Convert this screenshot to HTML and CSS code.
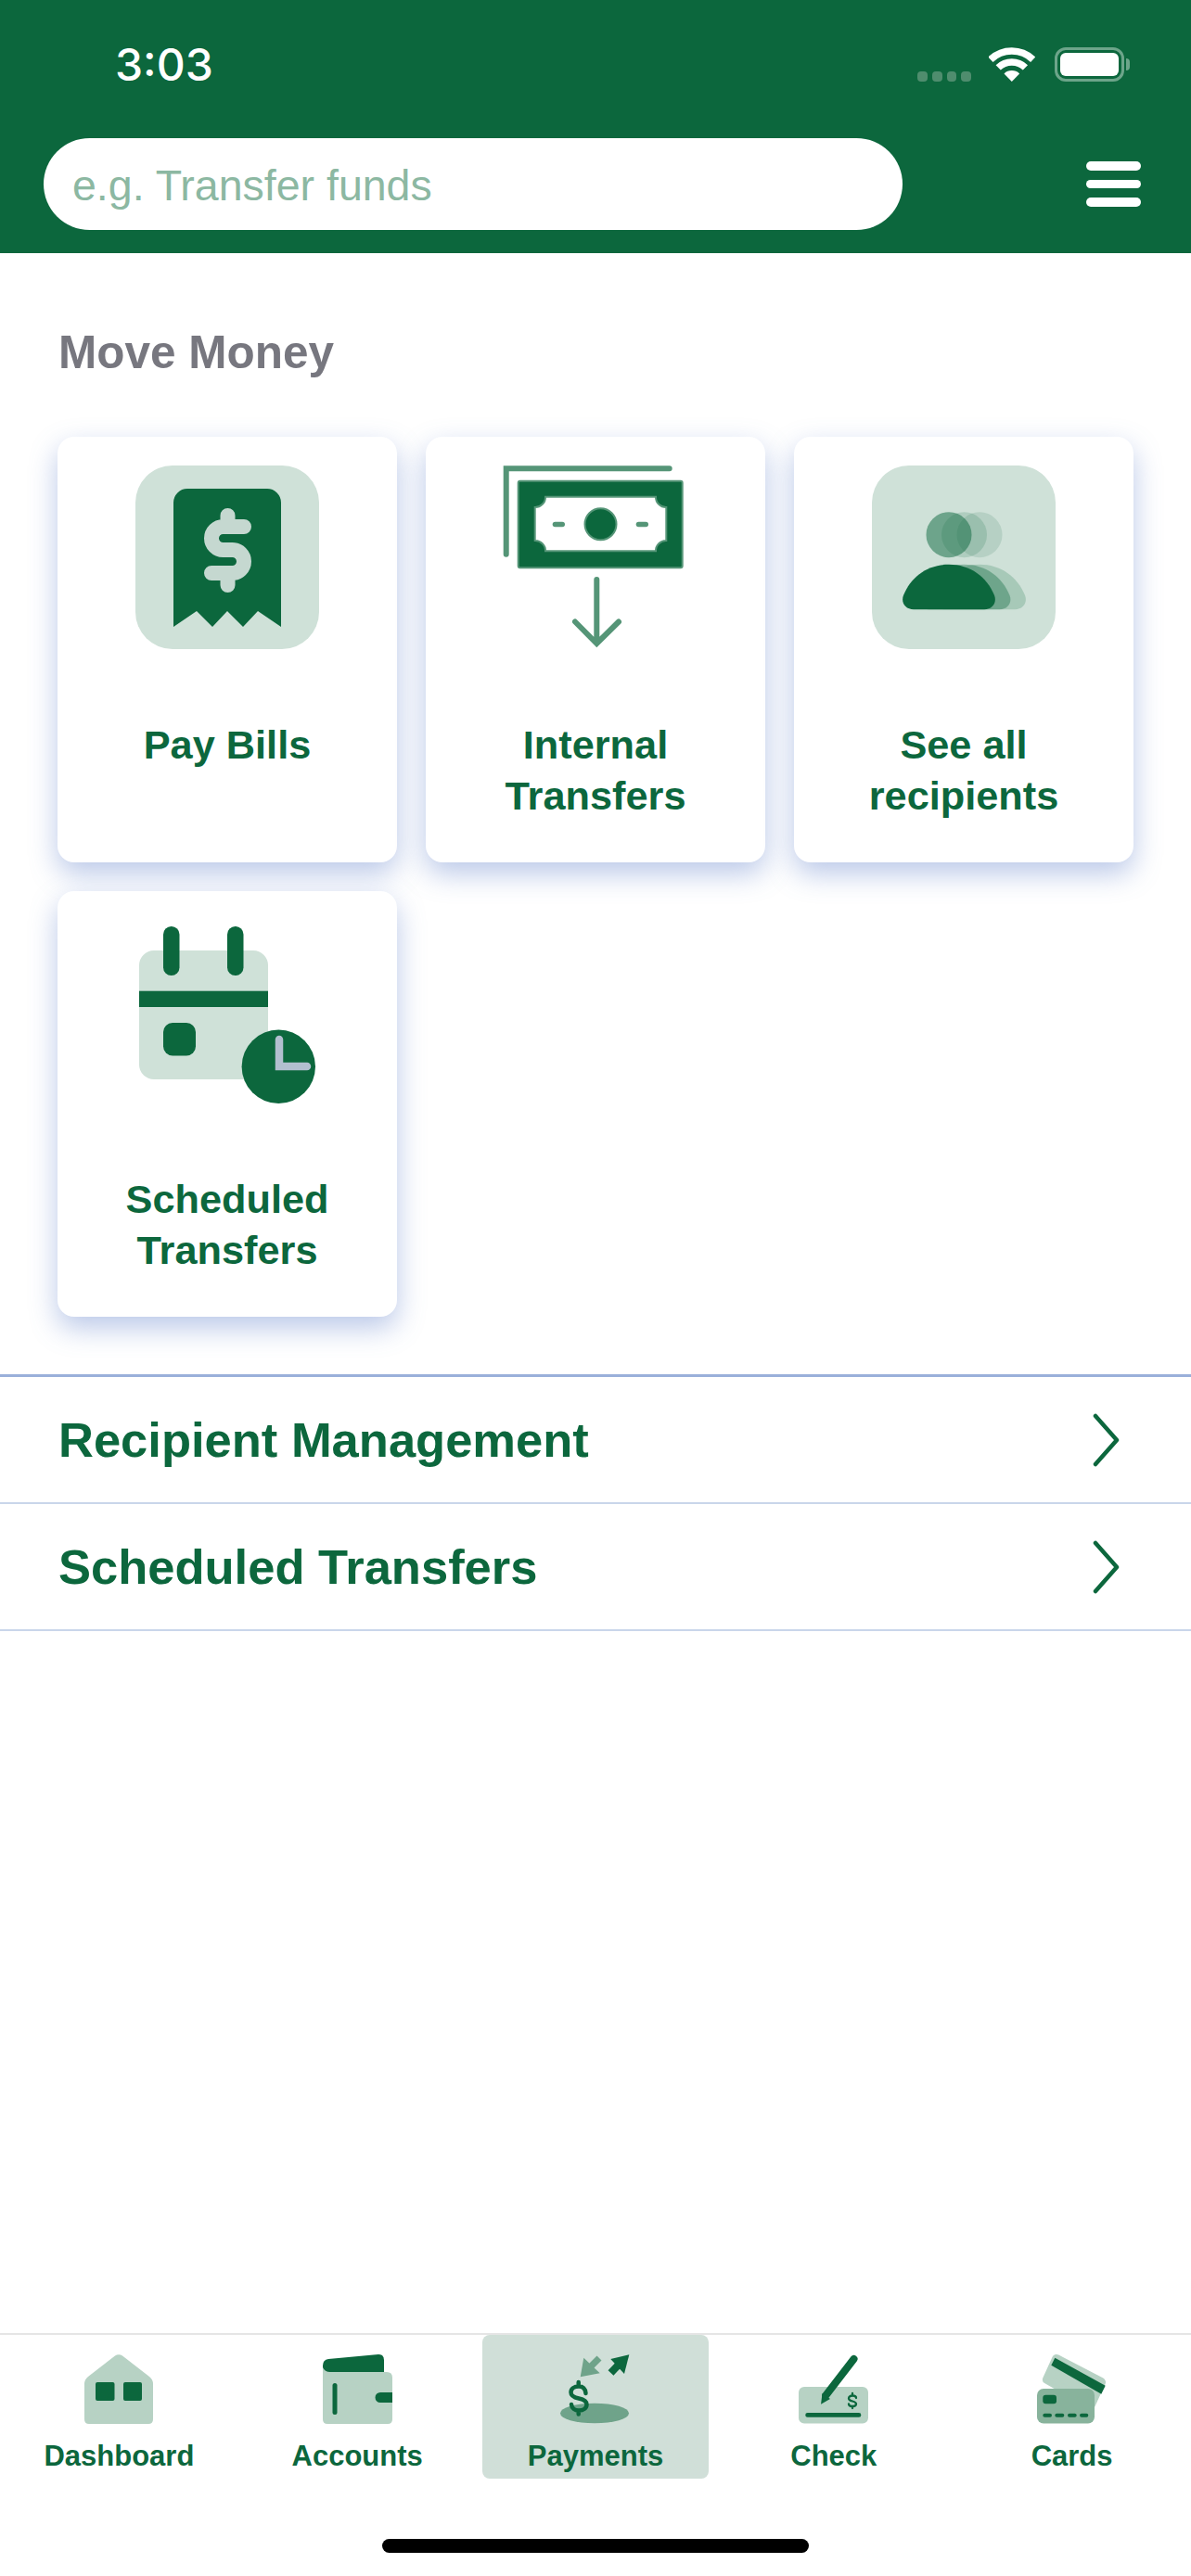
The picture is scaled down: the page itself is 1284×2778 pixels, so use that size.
FILE: index.html
```html
<!DOCTYPE html>
<html lang="en">
<head>
    <meta charset="UTF-8">
    <meta name="viewport" content="width=device-width, initial-scale=1.0">
    <title>Move Money</title>
    <link rel="stylesheet" href="styles.css">
</head>
<body>
<div class="app">

    <header class="topbar">
        <div class="status">
            <span class="time">3:03</span>
            <div class="status-icons">
                <div class="signal"><i></i><i></i><i></i><i></i></div>
                <svg class="wifi" viewBox="0 0 50 37">
                    <path class="wifi-arc" d="M1.9 13.2A33 33 0 0 1 47.7 13.2"/>
                    <path class="wifi-arc" d="M10.2 21.9A21 21 0 0 1 39.4 21.9"/>
                    <path class="white" d="M24.8 37L16.5 28.4A12 12 0 0 1 33.1 28.4Z"/>
                </svg>
                <div class="battery"><div class="battery-fill"></div></div>
                <div class="battery-nub"></div>
            </div>
        </div>
        <div class="search-row">
            <div class="search">e.g. Transfer funds</div>
            <div class="menu"><i></i><i></i><i></i></div>
        </div>
    </header>

    <main class="content">
        <h1 class="title">Move Money</h1>

        <div class="tiles">
            <a class="tile">
                <svg class="tile-icon" viewBox="0 0 198 198">
                    <rect class="pale" width="198" height="198" rx="40"/>
                    <path class="dark" d="M41 174V40A15 15 0 0 1 56 25H142A15 15 0 0 1 157 40V174L132 157L116 174L99 157L83 174L66 157Z"/>
                    <path class="receipt-dollar" d="M117 66H94.5A12.5 12.5 0 0 0 94.5 91H104.5A12.5 12.5 0 0 1 104.5 116H82M99.5 54V66M99.5 116V129"/>
                </svg>
                <span class="tile-label">Pay Bills</span>
            </a>
            <a class="tile">
                <svg class="tile-icon" viewBox="0 0 198 198">
                    <path class="money-line" d="M2.7 95.7V3.3H178.7"/>
                    <rect class="dark bill-edge" x="15.7" y="16.7" width="177" height="93.6" rx="2"/>
                    <path class="white bill-edge" d="M45 33.7H164A11 11 0 0 0 175.3 45V81A11 11 0 0 0 164 92.3H45A11 11 0 0 0 33.7 81V45A11 11 0 0 0 45 33.7Z"/>
                    <circle class="dark bill-edge" cx="104.5" cy="63.3" r="17"/>
                    <rect class="mid" x="52.7" y="60.7" width="13.3" height="5.6" rx="2.8"/>
                    <rect class="mid" x="142.7" y="60.7" width="13.3" height="5.6" rx="2.8"/>
                    <path class="money-line" d="M100.3 123V190M77 168.5L100.3 192L124 168.5"/>
                </svg>
                <span class="tile-label">Internal<br>Transfers</span>
            </a>
            <a class="tile">
                <svg class="tile-icon" viewBox="0 0 198 198">
                    <rect class="pale" width="198" height="198" rx="40"/>
                    <circle class="dark fade-1" cx="116" cy="74.7" r="24.5"/>
                    <circle class="dark fade-2" cx="99.5" cy="74.7" r="24.5"/>
                    <circle class="dark fade-3" cx="83" cy="74.7" r="24.5"/>
                    <g class="dark">
                        <path class="fade-4" transform="translate(33 0)" d="M45 155.3H121C130 155.3 135 148 132 140C124 120 106 106.7 83 106.7C60 106.7 42 120 34 140C31 148 36 155.3 45 155.3Z"/>
                        <path class="fade-5" transform="translate(16.5 0)" d="M45 155.3H121C130 155.3 135 148 132 140C124 120 106 106.7 83 106.7C60 106.7 42 120 34 140C31 148 36 155.3 45 155.3Z"/>
                        <path d="M45 155.3H121C130 155.3 135 148 132 140C124 120 106 106.7 83 106.7C60 106.7 42 120 34 140C31 148 36 155.3 45 155.3Z"/>
                    </g>
                </svg>
                <span class="tile-label">See all<br>recipients</span>
            </a>
            <a class="tile">
                <svg class="tile-icon" viewBox="0 0 198 198">
                    <rect class="pale" x="4" y="33" width="139" height="139" rx="16"/>
                    <rect class="dark" x="30" y="7" width="17.5" height="53" rx="8.7"/>
                    <rect class="dark" x="99" y="7" width="17.5" height="53" rx="8.7"/>
                    <rect class="dark" x="4" y="76.7" width="139" height="17.3"/>
                    <rect class="dark" x="30" y="111" width="35" height="35.5" rx="10"/>
                    <circle class="dark" cx="154.3" cy="158.3" r="39.7"/>
                    <path class="clock-hand" d="M155 129V158H185"/>
                </svg>
                <span class="tile-label">Scheduled<br>Transfers</span>
            </a>
        </div>

        <ul class="links">
            <li class="link-row">
                <span>Recipient Management</span>
                <svg class="chevron" viewBox="0 0 32 60"><path d="M3 4L26 30L3 56"/></svg>
            </li>
            <li class="link-row">
                <span>Scheduled Transfers</span>
                <svg class="chevron" viewBox="0 0 32 60"><path d="M3 4L26 30L3 56"/></svg>
            </li>
        </ul>
    </main>

    <footer class="tabbar">
        <nav class="tabs">
            <a class="tab">
                <svg class="tab-icon" viewBox="0 0 75 75">
                    <path class="soft" d="M33 1.5Q37 -1 41 1.5L70 24Q74 27 74 32V70Q74 75 69 75H5Q0 75 0 70V32Q0 27 4 24Z"/>
                    <rect class="dark" x="12" y="30" width="20.5" height="20" rx="2"/>
                    <rect class="dark" x="42" y="30" width="20" height="20" rx="2"/>
                </svg>
                <span>Dashboard</span>
            </a>
            <a class="tab">
                <svg class="tab-icon" viewBox="0 0 75 75">
                    <path class="dark" d="M0 12Q0 6 6 5L60 0Q66 0 66 6V25H0Z"/>
                    <path class="soft" d="M0 14Q2 19 8 19H69Q75 19 75 25V70Q75 75 70 75H5Q0 75 0 70Z"/>
                    <rect class="dark" x="10.5" y="31" width="5" height="34" rx="2.5"/>
                    <path class="dark" d="M62 41H75V52H62A5.5 5.5 0 0 1 62 41Z"/>
                </svg>
                <span>Accounts</span>
            </a>
            <a class="tab is-active">
                <svg class="tab-icon" viewBox="0 0 75 75">
                    <ellipse class="mid-soft" cx="37" cy="63.5" rx="37" ry="10.8"/>
                    <path class="mid-soft" d="M21.7 24.3L25.3 3.7L42.7 20.3Z"/>
                    <path class="arrow-back" d="M33 13L42 4"/>
                    <path class="dark" d="M54.3 5L74.3 0.3L69 21Z"/>
                    <path class="arrow-front" d="M63 11L54.5 20"/>
                    <path class="big-dollar" d="M27.5 42C27 37 24 34.5 20 34.5C15 34.5 11.5 37 11.5 41C11.5 45 15 46.5 20 47.5C25 48.5 28.5 50 28.5 54C28.5 58 25 60.5 20 60.5C15.5 60.5 12.5 58 12 54M19.7 30V34M19.7 61V64.5"/>
                </svg>
                <span>Payments</span>
            </a>
            <a class="tab">
                <svg class="tab-icon" viewBox="0 0 75 75">
                    <rect class="soft" y="35" width="75" height="39.5" rx="6"/>
                    <rect class="dark" x="7.3" y="63" width="60" height="4.7" rx="2.3"/>
                    <path class="dark" d="M24 53.7L25.5 42L34 48Z"/>
                    <path class="pen" d="M29.3 44.3L59.5 5"/>
                    <path class="small-dollar" d="M62 47C62 45 60 44.5 58 44.5C55.5 44.5 54 46 54 47.5C54 49.5 56 50 58 50.5C60 51 62 51.5 62 53.5C62 55 60.5 56 58 56C56 56 54 55.5 54 53.5M58 42V44.5M58 56V58"/>
                </svg>
                <span>Check</span>
            </a>
            <a class="tab">
                <svg class="tab-icon" viewBox="0 0 75 75">
                    <path class="soft card-back" d="M21 5L69 30L58 54L11 27Z"/>
                    <path class="dark" d="M19.3 3.7L73.7 33.7L69.3 42.7L15.3 11.7Z"/>
                    <rect class="mid-card" y="37" width="62" height="37.5" rx="7"/>
                    <rect class="dark" x="6.3" y="43.7" width="14.7" height="9.6" rx="3"/>
                    <rect class="dark" x="6.3" y="63.7" width="9.7" height="4" rx="2"/>
                    <rect class="dark" x="19.3" y="63.7" width="10" height="4" rx="2"/>
                    <rect class="dark" x="33" y="63.7" width="9.7" height="4" rx="2"/>
                    <rect class="dark" x="46" y="63.7" width="9.3" height="4" rx="2"/>
                </svg>
                <span>Cards</span>
            </a>
        </nav>
        <div class="home-bar"></div>
    </footer>

</div>
</body>
</html>
```

FILE: styles.css
```css
body {
    margin: 0;
    background-color: #fff;
    font-family: "Liberation Sans", Arial, sans-serif;
    color: #0c673d;
}

.app {
    display: flex;
    flex-direction: column;
    height: 2778px;
}

/* svg colours */
.dark { fill: #0c673d; }
.pale { fill: #cfe1d8; }
.soft { fill: #b7d2c4; }
.mid { fill: #559577; }
.mid-soft { fill: #6fa38a; }
.mid-card { fill: #88b39c; }
.white { fill: #fff; }

.fade-1 { opacity: 0.13; }
.fade-2 { opacity: 0.16; }
.fade-3 { opacity: 0.5; }
.fade-4 { opacity: 0.2; }
.fade-5 { opacity: 0.36; }

/* header */
.topbar {
    height: 273px;
    flex-shrink: 0;
    background-color: #0c673d;
}

.status {
    display: flex;
    justify-content: space-between;
    align-items: center;
    height: 37px;
    padding: 51px 66px 0 124px;
}

.time {
    font-family: Inter, "Liberation Sans", sans-serif;
    font-size: 48px;
    font-weight: 500;
    line-height: 37px;
    color: #fff;
}

.status-icons {
    display: flex;
    align-items: flex-end;
}

.signal {
    display: flex;
    gap: 5px;
    margin-right: 19px;
}

.signal i {
    width: 10.7px;
    height: 10.7px;
    border-radius: 4px;
    background-color: #4f8d6e;
}

.wifi {
    width: 50px;
    height: 37px;
    margin-right: 21px;
}

.wifi-arc {
    fill: none;
    stroke: #fff;
    stroke-width: 7.5;
}

.battery {
    box-sizing: border-box;
    width: 75px;
    height: 37px;
    padding: 3px;
    border: 3px solid #6da58a;
    border-radius: 12px;
}

.battery-fill {
    height: 100%;
    border-radius: 6px;
    background-color: #fff;
}

.battery-nub {
    align-self: center;
    width: 4px;
    height: 13px;
    margin-left: 2px;
    border-radius: 0 6px 6px 0;
    background-color: #6da58a;
}

.search-row {
    display: flex;
    justify-content: space-between;
    align-items: center;
    margin-top: 61px;
    padding: 0 54px 0 47px;
}

.search {
    box-sizing: border-box;
    width: 926px;
    height: 99px;
    padding: 2px 0 0 31px;
    border-radius: 50px;
    background-color: #fff;
    font-size: 46.5px;
    line-height: 99px;
    color: #8cb8a2;
}

.menu {
    display: flex;
    flex-direction: column;
    gap: 10px;
    width: 59px;
}

.menu i {
    height: 9.5px;
    border-radius: 5px;
    background-color: #fff;
}

/* content */
.content {
    flex: 1;
    padding-top: 79px;
}

.title {
    margin: 0 0 63px 63px;
    font-size: 49.5px;
    font-weight: bold;
    line-height: 56px;
    color: #77777f;
}

.tiles {
    display: grid;
    grid-template-columns: repeat(3, 366px);
    gap: 31px;
    padding: 0 62px;
}

.tile {
    display: flex;
    flex-direction: column;
    align-items: center;
    box-sizing: border-box;
    height: 459px;
    padding-top: 31px;
    border-radius: 18px;
    background-color: #fff;
    box-shadow: 0 12px 30px rgba(90, 125, 200, 0.42);
}

.tile-icon {
    width: 198px;
    height: 198px;
    overflow: visible;
}

.tile-label {
    margin-top: 76px;
    font-size: 43.3px;
    font-weight: bold;
    line-height: 55px;
    text-align: center;
}

.receipt-dollar {
    fill: none;
    stroke: #c5d8d0;
    stroke-width: 16;
    stroke-linecap: round;
}

.money-line {
    fill: none;
    stroke: #559577;
    stroke-width: 6;
    stroke-linecap: round;
}

.bill-edge {
    stroke: #559577;
    stroke-width: 2;
}

.clock-hand {
    fill: none;
    stroke: #b2bfcf;
    stroke-width: 8.5;
    stroke-linecap: round;
}

/* list */
.links {
    margin: 62px 0 0;
    padding: 0;
    list-style: none;
    border-top: 3px solid #9ab0da;
}

.link-row {
    display: flex;
    justify-content: space-between;
    align-items: center;
    box-sizing: border-box;
    height: 137px;
    padding: 0 74px 0 63px;
    border-bottom: 2px solid #c9d6ea;
    font-size: 52.5px;
    font-weight: bold;
}

.chevron {
    width: 32px;
    height: 60px;
}

.chevron path {
    fill: none;
    stroke: #0c673d;
    stroke-width: 4.5;
    stroke-linecap: round;
    stroke-linejoin: round;
}

/* bottom tabs */
.tabbar {
    flex-shrink: 0;
    height: 262px;
    box-sizing: border-box;
    border-top: 2px solid #e5e5e5;
}

.tabs {
    display: grid;
    grid-template-columns: repeat(5, 1fr);
}

.tab {
    display: flex;
    flex-direction: column;
    align-items: center;
    box-sizing: border-box;
    height: 155px;
    margin: 0 6px;
    padding-top: 21px;
    border-radius: 8px;
    font-size: 31px;
    font-weight: bold;
    line-height: 36px;
}

.tab span {
    margin-top: 17px;
}

.tab.is-active {
    background-color: #d0dfd8;
}

.tab-icon {
    width: 75px;
    height: 75px;
    overflow: visible;
}

.arrow-back {
    stroke: #6fa38a;
    stroke-width: 7;
}

.arrow-front {
    stroke: #0c673d;
    stroke-width: 8;
}

.big-dollar {
    fill: none;
    stroke: #0c673d;
    stroke-width: 4.5;
    stroke-linecap: round;
}

.small-dollar {
    fill: none;
    stroke: #0c673d;
    stroke-width: 2.3;
    stroke-linecap: round;
}

.pen {
    fill: none;
    stroke: #0c673d;
    stroke-width: 8;
    stroke-linecap: round;
}

.card-back {
    stroke: #b7d2c4;
    stroke-width: 10;
    stroke-linejoin: round;
}

.home-bar {
    width: 460px;
    height: 15px;
    margin: 65px auto 0;
    border-radius: 8px;
    background-color: #000;
}
```
